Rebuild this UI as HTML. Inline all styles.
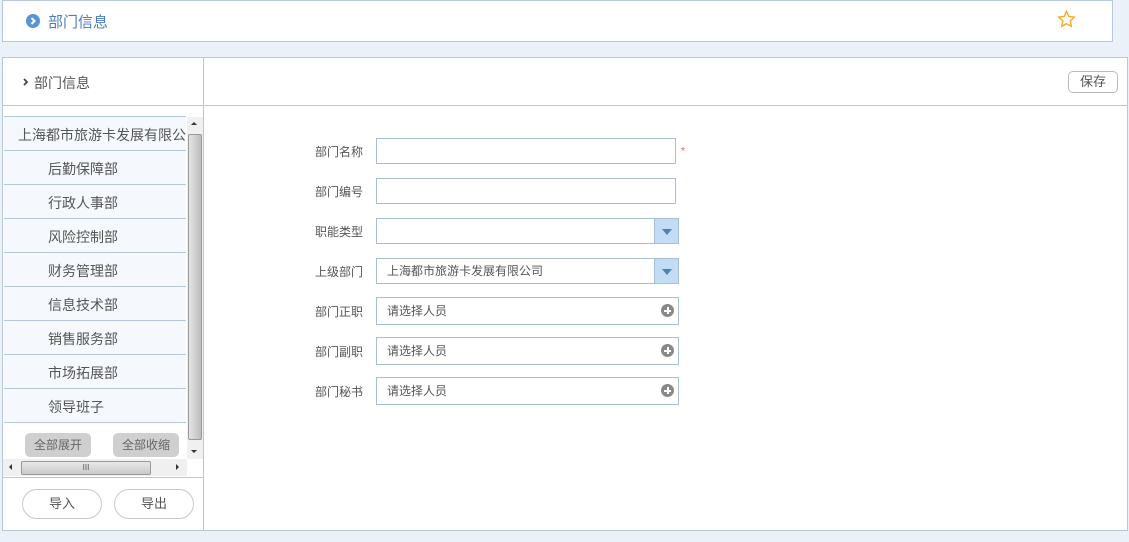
<!DOCTYPE html>
<html><head><meta charset="utf-8"><style>
*{box-sizing:border-box;margin:0;padding:0}
body{width:1129px;height:542px;background:#eaf1f9;font-family:"Liberation Sans","Noto Sans CJK SC",sans-serif;font-size:13px;color:#555;position:relative;overflow:hidden}
.abs{position:absolute}
.top{left:2px;top:0;width:1111px;height:42px;background:#fff;border:1px solid #b8c8dc}
.main{left:2px;top:57px;width:1126px;height:474px;background:#fff;border:1px solid #b8c8dc}
.row{position:absolute;left:4px;width:182px;height:34px;background:#f5f9fd;border-bottom:1px solid #b8c8dc;line-height:36px;font-size:14px;color:#555}
.lbl{position:absolute;left:315px;font-size:12px;color:#555}
.inp{position:absolute;left:376px;width:300px;height:26px;border:1px solid #a9bfd6;background:#fff;font-size:12px;line-height:24px;padding-left:10px;color:#555}
.arr{position:absolute;right:-1px;top:-1px;width:25px;height:26px;background:#c3dcf5;border:1px solid #a9bfd6}
.arr:after{content:"";position:absolute;left:7px;top:10px;border-left:5px solid transparent;border-right:5px solid transparent;border-top:6px solid #4f7fb3}
.plus{position:absolute;right:4px;top:6px;width:13px;height:13px;border-radius:50%;background:#888}
.plus:before{content:"";position:absolute;left:3px;top:5.5px;width:7px;height:2px;background:#fff}
.plus:after{content:"";position:absolute;left:5.5px;top:3px;width:2px;height:7px;background:#fff}
.gb{position:absolute;top:433px;height:24px;width:66px;background:#cfcfcf;border-radius:5px;font-size:12px;line-height:24px;text-align:center;color:#666}
.ob{position:absolute;top:489px;width:80px;height:30px;border:1px solid #c8c8c8;border-radius:15px;text-align:center;line-height:28px;font-size:13px;color:#555;background:#fff}
</style></head><body>
<div class="abs top"></div>
<svg class="abs" style="left:26px;top:14px" width="14" height="14" viewBox="0 0 14 14"><circle cx="7" cy="7" r="7" fill="#5a93d6"/><path d="M5.5 4l3 3-3 3" fill="none" stroke="#fff" stroke-width="2"/></svg>
<div class="abs" style="left:48px;top:11px;font-size:15px;color:#4a7cc0">部门信息</div>
<svg class="abs" style="left:1057px;top:10px" width="19" height="18" viewBox="0 0 20 19"><path d="M10 1.5l2.5 5.3 5.8.7-4.3 4 1.1 5.8L10 14.4l-5.1 2.9 1.1-5.8-4.3-4 5.8-.7z" fill="none" stroke="#f5a623" stroke-width="1.4"/></svg>

<div class="abs main"></div>
<div class="abs" style="left:203px;top:57px;width:1px;height:474px;background:#b8c8dc"></div>
<div class="abs" style="left:3px;top:105px;width:1124px;height:1px;background:#b8c8dc"></div>
<svg class="abs" style="left:23px;top:78px" width="6" height="8" viewBox="0 0 6 8"><path d="M1 1l3 3-3 3" fill="none" stroke="#444" stroke-width="1.8"/></svg>
<div class="abs" style="left:34px;top:73px;font-size:14px;color:#555">部门信息</div>
<div class="abs" style="left:1068px;top:71px;width:50px;height:22px;border:1px solid #bbb;border-radius:5px;text-align:center;line-height:20px;font-size:13px;color:#555">保存</div>

<div class="abs" style="left:4px;top:116px;width:182px;height:1px;background:#b8c8dc"></div>
<div class="row" style="top:117px;padding-left:14px;white-space:nowrap;overflow:hidden">上海都市旅游卡发展有限公司</div>
<div class="row" style="top:151px;padding-left:44px">后勤保障部</div>
<div class="row" style="top:185px;padding-left:44px">行政人事部</div>
<div class="row" style="top:219px;padding-left:44px">风险控制部</div>
<div class="row" style="top:253px;padding-left:44px">财务管理部</div>
<div class="row" style="top:287px;padding-left:44px">信息技术部</div>
<div class="row" style="top:321px;padding-left:44px">销售服务部</div>
<div class="row" style="top:355px;padding-left:44px">市场拓展部</div>
<div class="row" style="top:389px;padding-left:44px">领导班子</div>
<div class="gb" style="left:25px">全部展开</div>
<div class="gb" style="left:113px">全部收缩</div>
<div class="abs" style="left:187px;top:117px;width:16px;height:342px;background:#f0f0f0"></div>
<div class="abs" style="left:188px;top:134px;width:14px;height:306px;background:linear-gradient(90deg,#e4e4e4,#bdbdbd);border:1px solid #999;border-radius:2px"></div>
<div class="abs" style="left:191px;top:122px;border-left:3px solid transparent;border-right:3px solid transparent;border-bottom:3px solid #333"></div>
<div class="abs" style="left:191px;top:450px;border-left:3px solid transparent;border-right:3px solid transparent;border-top:3px solid #333"></div>
<div class="abs" style="left:3px;top:459px;width:184px;height:17px;background:#f0f0f0"></div>
<div class="abs" style="left:21px;top:461px;width:130px;height:14px;background:linear-gradient(#e8e8e8,#c9c9c9);border:1px solid #999;border-radius:2px;font-size:8px;text-align:center;line-height:12px;color:#555">III</div>
<div class="abs" style="left:9px;top:464px;border-top:3px solid transparent;border-bottom:3px solid transparent;border-right:3px solid #333"></div>
<div class="abs" style="left:176px;top:464px;border-top:3px solid transparent;border-bottom:3px solid transparent;border-left:3px solid #333"></div>
<div class="abs" style="left:3px;top:477px;width:200px;height:1px;background:#b8c8dc"></div>
<div class="ob" style="left:22px">导入</div>
<div class="ob" style="left:114px">导出</div>

<div class="lbl" style="top:143px">部门名称</div>
<div class="inp" style="top:138px"></div>
<div class="abs" style="left:681px;top:146px;color:#e55;font-size:10px">*</div>
<div class="lbl" style="top:183px">部门编号</div>
<div class="inp" style="top:178px"></div>
<div class="lbl" style="top:223px">职能类型</div>
<div class="inp" style="top:218px;width:303px"><div class="arr"></div></div>
<div class="lbl" style="top:263px">上级部门</div>
<div class="inp" style="top:258px;width:303px">上海都市旅游卡发展有限公司<div class="arr"></div></div>
<div class="lbl" style="top:303px">部门正职</div>
<div class="inp" style="top:297px;width:303px;height:28px;line-height:26px">请选择人员<div class="plus"></div></div>
<div class="lbl" style="top:343px">部门副职</div>
<div class="inp" style="top:337px;width:303px;height:28px;line-height:26px">请选择人员<div class="plus"></div></div>
<div class="lbl" style="top:383px">部门秘书</div>
<div class="inp" style="top:377px;width:303px;height:28px;line-height:26px">请选择人员<div class="plus"></div></div>
</body></html>
